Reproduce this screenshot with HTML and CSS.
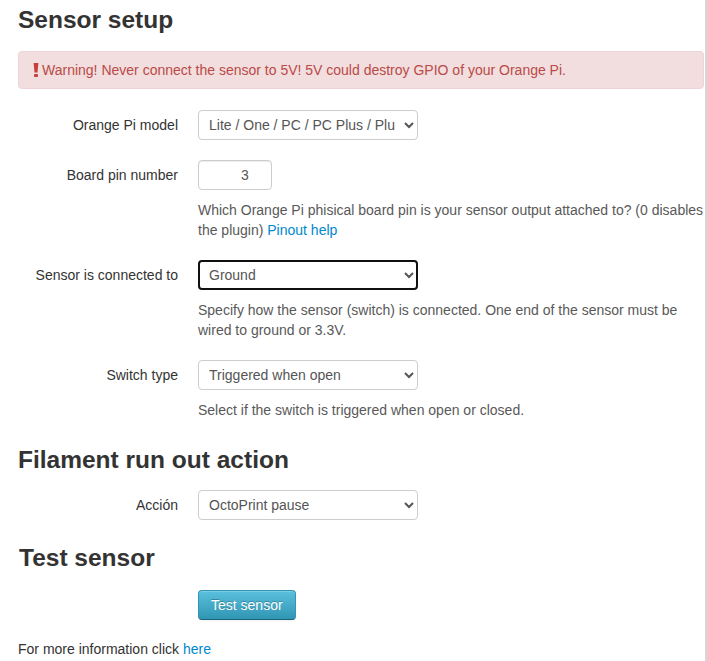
FILE: index.html
```html
<!DOCTYPE html>
<html lang="en">
<head>
<meta charset="utf-8">
<title>Sensor setup</title>
<link rel="stylesheet" href="styles.css">
</head>
<body>
<div class="page">
  <h3 class="title">Sensor setup</h3>
  <div class="alert">
    <svg class="alert-icon" width="6" height="14" viewBox="0 0 6 14" aria-hidden="true">
      <path d="M0.6 0h4.8l-0.9 9.5h-3z" fill="currentColor"/>
      <rect x="1.1" y="11" width="3.8" height="3" rx="0.4" fill="currentColor"/>
    </svg>
    <span>Warning! Never connect the sensor to 5V! 5V could destroy GPIO of your Orange Pi.</span>
  </div>

  <form class="form-horizontal">
    <div class="control-group">
      <label class="control-label">Orange Pi model</label>
      <div class="controls">
        <select class="select">
          <option>Lite / One / PC / PC Plus / Plus 2E / Zero Plus</option>
        </select>
      </div>
    </div>
    <div class="control-group">
      <label class="control-label">Board pin number</label>
      <div class="controls">
        <input class="input-mini" type="text" value="3">
        <p class="help-block">Which Orange Pi phisical board pin is your sensor output attached to? (0 disables the plugin) <a href="#">Pinout help</a></p>
      </div>
    </div>
    <div class="control-group">
      <label class="control-label">Sensor is connected to</label>
      <div class="controls">
        <select class="select focused">
          <option>Ground</option>
        </select>
        <p class="help-block">Specify how the sensor (switch) is connected. One end of the sensor must be wired to ground or 3.3V.</p>
      </div>
    </div>
    <div class="control-group">
      <label class="control-label">Switch type</label>
      <div class="controls">
        <select class="select">
          <option>Triggered when open</option>
        </select>
        <p class="help-block">Select if the switch is triggered when open or closed.</p>
      </div>
    </div>
  </form>

  <h3 class="title">Filament run out action</h3>
  <form class="form-horizontal action-form">
    <div class="control-group tight">
      <label class="control-label">Acción</label>
      <div class="controls">
        <select class="select">
          <option>OctoPrint pause</option>
        </select>
      </div>
    </div>
  </form>

  <h3 class="title indent">Test sensor</h3>
  <div class="button-row">
    <button type="button" class="btn btn-info">Test sensor</button>
  </div>
  <p class="more">For more information click <a href="#">here</a></p>
</div>
</body>
</html>
```

FILE: styles.css
```css
html, body {
  margin: 0;
  padding: 0;
  background: #fff;
}

body {
  font-family: "Liberation Sans", Arial, sans-serif;
  font-size: 14px;
  line-height: 20px;
  color: #333;
}

.page {
  box-sizing: border-box;
  width: 707px;
  min-height: 661px;
  padding: 0 1px 0 18px;
  border-right: 2px solid #d6d6d6;
}

a {
  color: #0088cc;
  text-decoration: none;
}

.title {
  margin: 0;
  font-size: 24.5px;
  line-height: 40px;
  font-weight: bold;
  color: #333;
}

.title.indent {
  padding-left: 1px;
}

.alert {
  display: flex;
  align-items: center;
  gap: 3px;
  margin: 11px 0 21px;
  padding: 8px 35px 8px 14px;
  background: #f2dede;
  border: 1px solid #eed3d7;
  border-radius: 4px;
  color: #b94a48;
}

.alert-icon {
  color: #c4403d;
  flex: none;
}

.form-horizontal {
  margin: 0;
}

.action-form {
  margin-top: 10px;
}

.control-group {
  display: flex;
  gap: 20px;
  margin-bottom: 20px;
}

.control-group.tight {
  margin-bottom: 18px;
}

.control-label {
  flex: none;
  width: 160px;
  padding-top: 5px;
  text-align: right;
  color: #333;
}

.controls {
  flex: 1;
  min-width: 0;
}

.select {
  display: block;
  box-sizing: border-box;
  width: 220px;
  height: 30px;
  padding: 4px 6px;
  font-family: "Liberation Sans", Arial, sans-serif;
  font-size: 14px;
  color: #555;
  background: #fff;
  border: 1px solid #ccc;
  border-radius: 4px;
}

.select.focused {
  outline: 2px solid #101010;
  outline-offset: -2px;
}

.input-mini {
  display: block;
  box-sizing: border-box;
  width: 74px;
  height: 30px;
  padding: 4px 6px 4px 26px;
  font-family: "Liberation Sans", Arial, sans-serif;
  font-size: 14px;
  line-height: 20px;
  color: #555;
  text-align: center;
  border: 1px solid #ccc;
  border-radius: 4px;
  box-shadow: inset 0 1px 1px rgba(0, 0, 0, 0.075);
}

.help-block {
  display: block;
  margin: 10px 0 0;
  color: #595959;
}

.button-row {
  padding: 12px 0 0 180px;
}

.btn {
  display: inline-block;
  padding: 4px 12px;
  font-family: "Liberation Sans", Arial, sans-serif;
  font-size: 14px;
  line-height: 20px;
  border-radius: 4px;
  cursor: pointer;
}

.btn-info {
  color: #fff;
  text-shadow: 0 -1px 0 rgba(0, 0, 0, 0.25);
  background-color: #49afcd;
  background-image: linear-gradient(to bottom, #5bc0de, #2f96b4);
  border: 1px solid #2f96b4;
  border-bottom-color: #1f6377;
  box-shadow: inset 0 1px 0 rgba(255, 255, 255, 0.2), 0 1px 2px rgba(0, 0, 0, 0.05);
}

.more {
  margin: 19px 0 0;
}
```
